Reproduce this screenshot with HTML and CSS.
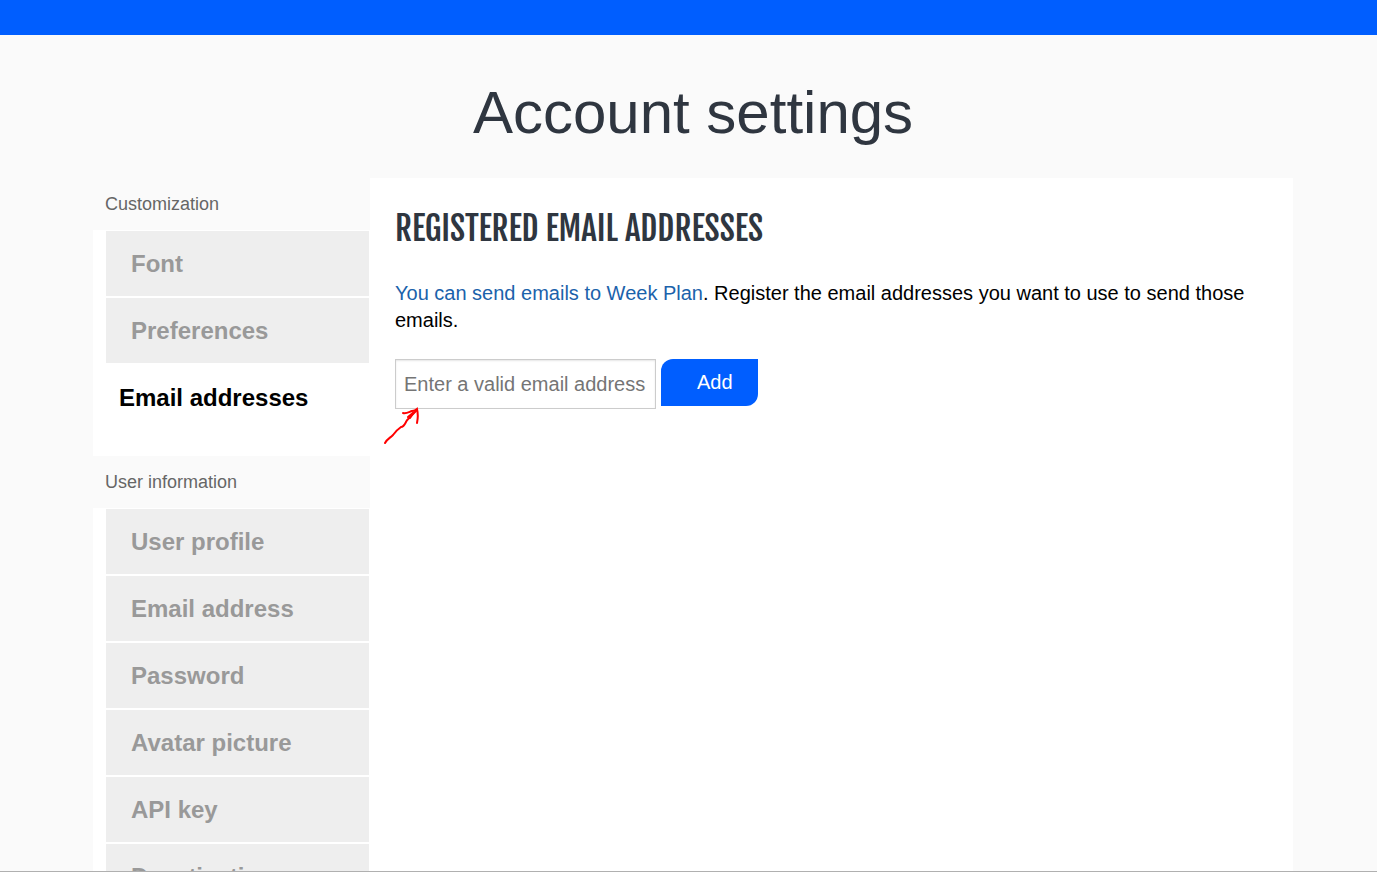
FILE: index.html
```html
<!DOCTYPE html>
<html lang="en">
<head>
    <meta charset="utf-8">
    <title>Account settings</title>
    <link rel="stylesheet" href="styles.css">
</head>
<body>
    <div class="page">
        <header class="topbar"></header>

        <main class="main">
            <h1>Account settings</h1>

            <div class="settings">
                <nav class="sidebar">
                    <h3>Customization</h3>
                    <ul>
                        <li><a href="#font">Font</a></li>
                        <li><a href="#preferences">Preferences</a></li>
                        <li class="active"><a href="#emails">Email addresses</a></li>
                    </ul>
                    <h3>User information</h3>
                    <ul>
                        <li><a href="#profile">User profile</a></li>
                        <li><a href="#email">Email address</a></li>
                        <li><a href="#password">Password</a></li>
                        <li><a href="#avatar">Avatar picture</a></li>
                        <li><a href="#api">API key</a></li>
                        <li><a href="#deactivation">Deactivation</a></li>
                    </ul>
                </nav>

                <section class="content">
                    <h2>Registered email addresses</h2>
                    <p><a href="#help">You can send emails to Week Plan</a>. Register the email addresses you want to use to send those emails.</p>
                    <form class="add-form">
                        <input type="email" aria-label="Email address" placeholder="Enter a valid email address">
                        <button type="button">Add</button>
                        <svg class="arrow" width="40" height="40" viewBox="0 0 40 40" aria-hidden="true">
                            <path d="M2 36 C4 32 7 31 10 28 C13 24 15 22 18 20 C20 20 21 19 23 15 C24 12 26 12 28 9 C30 7 32 5 34 3" />
                            <path d="M20 6 C23 7 26 5 29 4 C31 4 33 3 34 2 C35 6 35 11 34 16" />
                            <path d="M25 10 L31 5 L27 11" />
                        </svg>
                    </form>
                </section>
            </div>
        </main>
    </div>
</body>
</html>
```

FILE: styles.css
```css
* {
    box-sizing: border-box;
}
body {
    margin: 0;
    padding-bottom: 8px;
    height: 100vh;
    background: #fff;
    color: #000;
    font-family: "Liberation Sans", Arial, sans-serif;
    font-size: 20px;
    line-height: 27px;
}
a {
    color: #1b62ab;
    text-decoration: none;
}
.page {
    height: 100%;
    overflow: hidden;
    display: flex;
    flex-direction: column;
    background: #fafafa;
    border-bottom: 1px solid #b0b0b0;
}
.topbar {
    flex: none;
    height: 35px;
    background: #005eff;
}
.main {
    flex: 1;
    display: flex;
    flex-direction: column;
    padding-left: 9px;
}
h1 {
    margin: 43px 0 30px;
    color: #2f3640;
    font-size: 60px;
    font-weight: normal;
    line-height: 70px;
    text-align: center;
}
.settings {
    flex: 1;
    display: grid;
    grid-template-columns: 277px 1fr;
    width: 100%;
    max-width: 1200px;
    margin: 0 auto;
}

/* sidebar */
.sidebar h3 {
    margin: 0;
    padding: 12px;
    color: #666;
    font-size: 18px;
    font-weight: normal;
    line-height: 28px;
}
.sidebar ul {
    margin: 0;
    padding: 0 0 25px 12px;
    list-style: none;
    background: #fff;
}
.sidebar li {
    padding: 1px;
}
.sidebar li a {
    display: block;
    padding: 0 25px;
    background: #eee;
    color: #999;
    font-size: 24px;
    font-weight: bold;
    line-height: 65px;
}
.sidebar .active a {
    padding: 0 13px;
    background: #fff;
    color: #000;
}

/* content */
.content {
    padding: 25px;
    background: #fff;
}
h2 {
    margin: 0 0 25px;
    color: #2f3640;
    font-family: "Fjalla One", "Liberation Sans Narrow", "Liberation Sans", sans-serif;
    font-size: 33px;
    font-weight: normal;
    line-height: 52px;
    text-transform: uppercase;
}
.content p {
    margin: 0 0 25px;
}
.add-form {
    position: relative;
    display: flex;
    align-items: flex-start;
    gap: 5px;
}
.add-form input {
    width: 261px;
    height: 50px;
    padding: 0 8px;
    border: 1px solid #ccc;
    box-shadow: inset 0 1px 2px rgba(0, 0, 0, 0.1);
    font: inherit;
}
.add-form input::placeholder {
    color: #757575;
}
.add-form button {
    height: 47px;
    padding: 0 25px 0 36px;
    border: none;
    border-radius: 12px 0;
    background: #005eff;
    color: #fff;
    font: inherit;
    cursor: pointer;
}
.arrow {
    position: absolute;
    top: 48px;
    left: -12px;
    fill: none;
    stroke: #f00;
    stroke-width: 2;
    stroke-linecap: round;
}
```
